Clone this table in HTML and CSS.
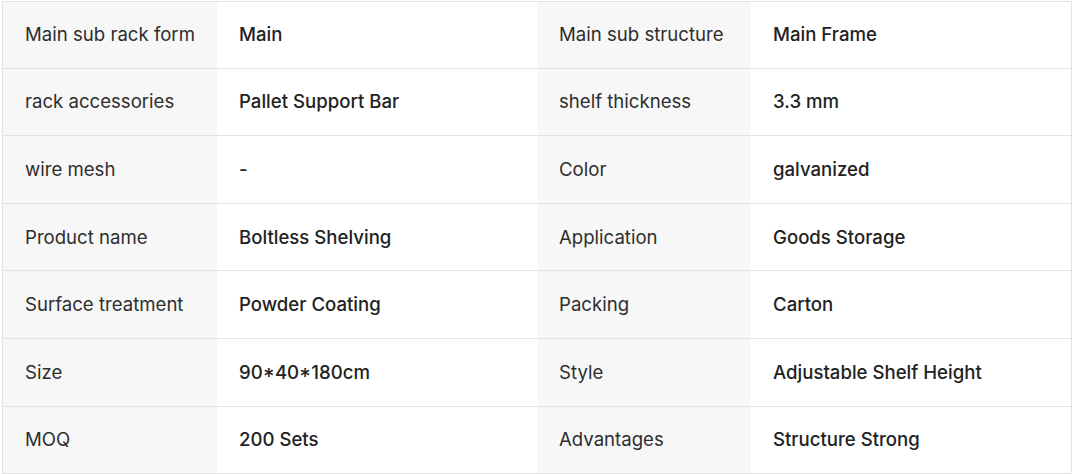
FILE: index.html
```html
<!DOCTYPE html>
<html>
<head>
<meta charset="utf-8">
<link rel="stylesheet" href="styles.css">
</head>
<body>
<div class="spec">
  <div class="row">
    <div class="label">Main sub rack form</div><div class="value">Main</div>
    <div class="label">Main sub structure</div><div class="value">Main Frame</div>
  </div>
  <div class="row">
    <div class="label">rack accessories</div><div class="value">Pallet Support Bar</div>
    <div class="label">shelf thickness</div><div class="value">3.3 mm</div>
  </div>
  <div class="row">
    <div class="label">wire mesh</div><div class="value">-</div>
    <div class="label">Color</div><div class="value">galvanized</div>
  </div>
  <div class="row">
    <div class="label">Product name</div><div class="value">Boltless Shelving</div>
    <div class="label">Application</div><div class="value">Goods Storage</div>
  </div>
  <div class="row">
    <div class="label">Surface treatment</div><div class="value">Powder Coating</div>
    <div class="label">Packing</div><div class="value">Carton</div>
  </div>
  <div class="row">
    <div class="label">Size</div><div class="value">90*40*180cm</div>
    <div class="label">Style</div><div class="value">Adjustable Shelf Height</div>
  </div>
  <div class="row">
    <div class="label">MOQ</div><div class="value">200 Sets</div>
    <div class="label">Advantages</div><div class="value">Structure Strong</div>
  </div>
</div>
</body>
</html>
```

FILE: styles.css
```css
html, body {
  margin: 0;
  padding: 0;
  background: #ffffff;
}
body {
  padding: 1px 0 0 2px;
  font-family: "Inter", "Noto Sans", sans-serif;
}
.spec {
  width: 1070px;
  box-sizing: border-box;
  border: 1px solid #e3e3e3;
  border-bottom: none;
}
.row {
  display: grid;
  grid-template-columns: 214px 320px 214px 320px;
  height: 67.6px;
  border-bottom: 1px solid #e3e3e3;
  box-sizing: border-box;
}
.row:first-child {
  height: 66.6px;
}
.label, .value {
  display: flex;
  align-items: center;
  padding-left: 22px;
  padding-bottom: 1px;
  white-space: nowrap;
  font-size: 18.6px;
}
.label {
  background: #f7f7f7;
  color: #2e2e2e;
  font-weight: 400;
}
.value {
  background: #ffffff;
  color: #222222;
  font-weight: 500;
}
```
